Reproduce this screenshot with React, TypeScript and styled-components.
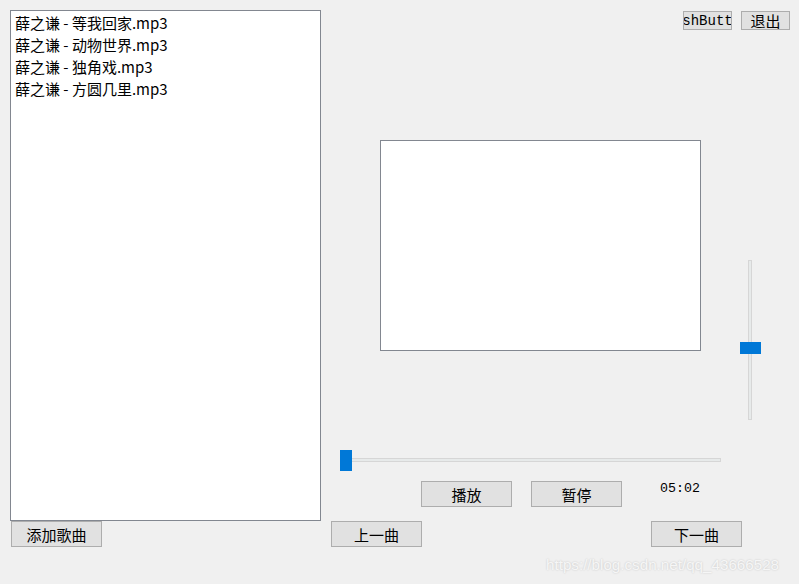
import React from 'react';
import styled, { createGlobalStyle } from 'styled-components';

const GlobalStyle = createGlobalStyle`
  html, body {
    margin: 0;
    padding: 0;
    background: #f0f0f0;
  }
`;

const Window = styled.div`
  position: relative;
  width: 799px;
  height: 584px;
  box-sizing: border-box;
  padding: 10px 0 0 10px;
  display: flex;
  background: #f0f0f0;
  overflow: hidden;
  font-family: 'Noto Sans CJK SC', 'Noto Sans', sans-serif;
  color: #000;
`;

const LeftColumn = styled.div`
  display: flex;
  flex-direction: column;
  width: 311px;
`;

const SongList = styled.ul`
  list-style: none;
  margin: 0;
  padding: 1px 0 0 4px;
  box-sizing: border-box;
  width: 311px;
  height: 511px;
  background: #fff;
  border: 1px solid #828790;
`;

const SongItem = styled.li`
  height: 22px;
  line-height: 22px;
  font-size: 15px;
  white-space: nowrap;
`;

const Button = styled.button<{ $w?: number; $h?: number }>`
  display: flex;
  align-items: center;
  justify-content: center;
  box-sizing: border-box;
  width: ${({ $w }) => $w ?? 91}px;
  height: ${({ $h }) => $h ?? 26}px;
  padding: 0;
  margin: 0;
  background: #e1e1e1;
  border: 1px solid #adadad;
  border-radius: 0;
  font-family: 'Noto Sans CJK SC', sans-serif;
  font-size: 15px;
  line-height: 1;
  color: #000;
  overflow: hidden;
  white-space: nowrap;
`;

const AddButton = styled(Button)`
  margin-left: 1px;
`;

const MonoLabel = styled.span`
  font-family: 'Liberation Mono', monospace;
  font-size: 14px;
`;

const RightColumn = styled.div`
  display: flex;
  flex-direction: column;
  flex: 1;
  margin-left: 10px;
  margin-top: -10px;
`;

const TopBar = styled.div`
  display: flex;
  justify-content: flex-end;
  gap: 9px;
  padding: 11px 9px 0 0;
  height: 19px;
`;

const Middle = styled.div`
  display: flex;
  align-items: flex-start;
  height: 420px;
`;

const VideoFrame = styled.div`
  box-sizing: border-box;
  width: 321px;
  height: 211px;
  margin: 110px 0 0 49px;
  background: #fff;
  border: 1px solid #828790;
`;

const VSlider = styled.div`
  position: relative;
  width: 21px;
  height: 160px;
  margin: 230px 0 0 39px;
`;

const VGroove = styled.div`
  box-sizing: border-box;
  width: 4px;
  height: 100%;
  margin-left: 8px;
  background: #e7eaea;
  border: 1px solid #d6d6d6;
`;

const Handle = styled.div`
  position: absolute;
  background: #0078d7;
`;

const HSlider = styled.div`
  position: relative;
  width: 381px;
  height: 21px;
  margin-left: 9px;
`;

const HGroove = styled.div`
  box-sizing: border-box;
  width: 100%;
  height: 4px;
  margin-top: 8px;
  background: #e7eaea;
  border: 1px solid #d6d6d6;
`;

const ControlRow = styled.div`
  display: flex;
  align-items: flex-start;
  margin: 10px 0 0 90px;
  gap: 19px;
`;

const TimeLabel = styled.span`
  margin: 0 0 0 19px;
  font-family: 'Liberation Mono', monospace;
  font-size: 13.3px;
  line-height: 16px;
`;

const NavRow = styled.div`
  display: flex;
  gap: 229px;
  margin-top: 14px;
`;

const Watermark = styled.div`
  position: absolute;
  left: 546px;
  top: 556px;
  font-family: 'Liberation Sans', Arial, sans-serif;
  font-size: 15.2px;
  color: #f6f6f6;
  text-shadow: 0 0 2px rgba(0, 0, 0, 0.2);
  white-space: nowrap;
`;

const songs = [
  '薛之谦 - 等我回家.mp3',
  '薛之谦 - 动物世界.mp3',
  '薛之谦 - 独角戏.mp3',
  '薛之谦 - 方圆几里.mp3',
];

const App: React.FC = () => {
  const volume = 51; // percent from top
  const progress = 0;

  return (
    <>
      <GlobalStyle />
      <Window>
        <LeftColumn>
          <SongList>
            {songs.map((s) => (
              <SongItem key={s}>{s}</SongItem>
            ))}
          </SongList>
          <AddButton>添加歌曲</AddButton>
        </LeftColumn>

        <RightColumn>
          <TopBar>
            <Button $w={49} $h={19}>
              <MonoLabel>PushButton</MonoLabel>
            </Button>
            <Button $w={49} $h={19}>退出</Button>
          </TopBar>

          <Middle>
            <VideoFrame />
            <VSlider>
              <VGroove />
              <Handle
                style={{ left: 0, top: `${(volume / 100) * 160}px`, width: 21, height: 12 }}
              />
            </VSlider>
          </Middle>

          <HSlider>
            <HGroove />
            <Handle style={{ top: 0, left: `${progress}px`, width: 12, height: 21 }} />
          </HSlider>

          <ControlRow>
            <Button>播放</Button>
            <Button>暂停</Button>
            <TimeLabel>05:02</TimeLabel>
          </ControlRow>

          <NavRow>
            <Button>上一曲</Button>
            <Button>下一曲</Button>
          </NavRow>
        </RightColumn>

        <Watermark>https://blog.csdn.net/qq_43666528</Watermark>
      </Window>
    </>
  );
};

export default App;
